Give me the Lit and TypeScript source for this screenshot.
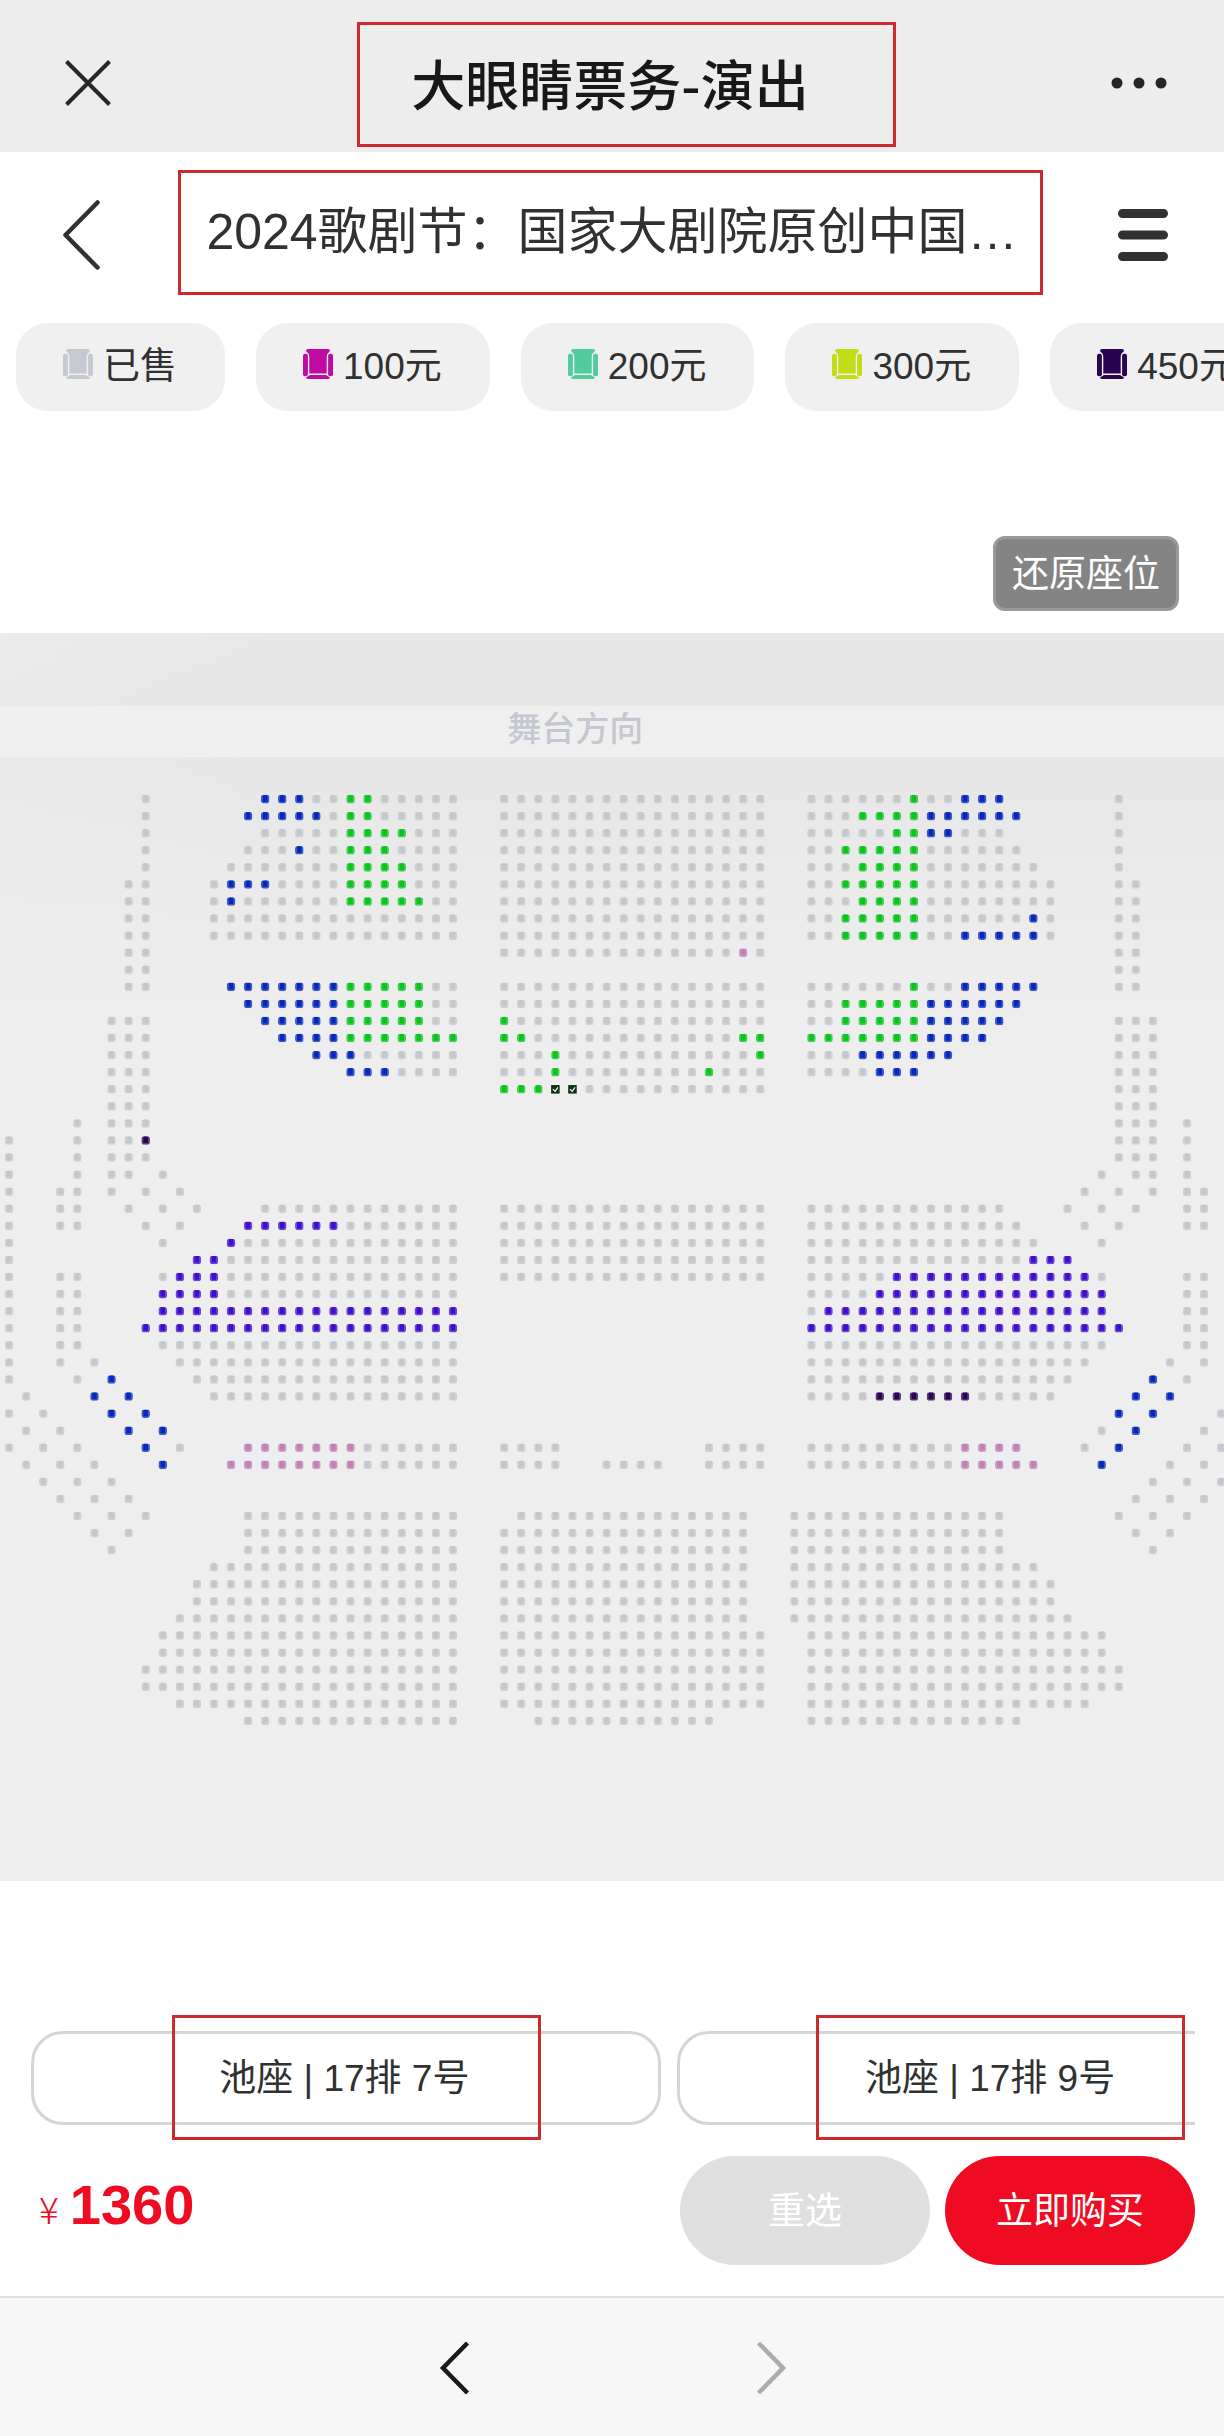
import { LitElement, html, svg, css } from "lit";
import { customElement, property } from "lit/decorators.js";

type SeatState = "s" | "b" | "g" | "v" | "p" | "d" | "k";

const SEAT_COLORS: Record<SeatState, string> = {
  s: "#c4c7ce",
  b: "#0827bb",
  g: "#0cc41f",
  v: "#3f0fcd",
  p: "#c47fb4",
  d: "#2c0350",
  k: "#0b3217",
};

// One entry per row. Each token is "column:runs", a run being a state letter and a count.
const SEAT_ROWS: string[] = [
  "8:s1 15:b3s2g2s5 29:s16 47:s6g1s2b3 65:s1",
  "8:s1 14:b5s1g2s5 29:s16 47:s3g4b6 65:s1",
  "8:s1 15:s5g4s3 29:s16 47:s5g2b2s3 65:s1",
  "8:s1 14:s3b1s2g3s4 29:s16 47:s2g5s6 65:s1",
  "8:s1 13:s7g4s3 29:s16 47:s3g4s7 65:s1",
  "7:s2 12:s1b3s4g4s3 29:s16 47:s2g5s8 65:s2",
  "7:s2 12:s1b1s6g5s2 29:s16 47:s3g4s8 65:s2",
  "7:s2 12:s15 29:s16 47:s2g5s6b1s1 65:s2",
  "7:s2 12:s15 29:s16 47:s2g5s2b5s1 65:s2",
  "7:s2 29:s14p1s1 65:s2",
  "7:s2 65:s2",
  "7:s2 13:b7g5s2 29:s16 47:s6g1s2b5 65:s2",
  "14:b6g5s2 29:s16 47:s2g5b6",
  "6:s3 15:b5g5s2 29:g1s15 47:s2g5b5 65:s3",
  "6:s3 16:b4g7 29:g2s12g2 47:g7b4 65:s3",
  "6:s3 18:b3s6 29:s3g1s11g1 47:s3b6 65:s3",
  "6:s3 20:b3s4 29:s3g1s8g1s3 47:s4b3 65:s3",
  "6:s3 29:g3k2s11 65:s3",
  "6:s3 65:s3",
  "4:s1 6:s3 65:s3 69:s1",
  "0:s1 4:s1 6:s2d1 65:s3 69:s1",
  "0:s1 4:s1 6:s3 65:s3 69:s1",
  "0:s1 4:s1 6:s2 9:s1 64:s1 66:s2 69:s1",
  "0:s1 3:s2 6:s1 8:s1 10:s1 63:s1 65:s1 67:s1 69:s2",
  "0:s1 3:s2 7:s1 9:s1 11:s1 15:s12 29:s16 47:s12 62:s1 64:s1 66:s1 69:s2",
  "0:s1 3:s2 8:s1 10:s1 14:v6s7 29:s16 47:s13 63:s1 65:s1 69:s2",
  "0:s1 9:s1 13:v1s13 29:s16 47:s14 64:s1",
  "0:s1 11:v2s14 29:s16 47:s13v3",
  "0:s1 3:s2 9:s1v3s14 29:s16 47:s5v12s1 69:s2",
  "0:s1 3:s2 9:v4s14 47:s4v14 69:s2",
  "0:s1 3:s2 9:v18 47:s1v17 69:s2",
  "0:s1 3:s2 8:v19 47:v19 69:s2",
  "0:s1 3:s2 9:s18 47:s18 69:s2",
  "0:s1 3:s1 5:s1 10:s17 47:s17 68:s1 70:s1",
  "0:s1 4:s1 6:b1 11:s16 47:s16 67:b1 69:s1",
  "1:s1 5:b1 7:b1 12:s15 47:s4d6s5 66:b1 68:b1",
  "0:s1 2:s1 6:b1 8:b1 65:b1 67:b1 71:s1",
  "1:s1 3:s1 7:b1 9:b1 64:s1 66:b1 70:s1",
  "0:s1 2:s1 4:s1 8:b1 10:s1 14:p7s6 29:s4 41:s4 47:s9p4 63:s1 65:b1 69:s1 71:s1",
  "1:s1 3:s1 5:s1 9:b1 13:p8s6 29:s4 35:s4 41:s4 47:s9p5 64:b1 68:s1 70:s1",
  "2:s1 4:s1 6:s1 67:s1 69:s1 71:s1",
  "3:s1 5:s1 7:s1 66:s1 68:s1 70:s1",
  "4:s1 6:s1 8:s1 14:s13 30:s14 46:s13 65:s1 67:s1 69:s1",
  "5:s1 7:s1 14:s13 29:s15 46:s13 66:s1 68:s1",
  "6:s1 14:s13 29:s15 46:s13 67:s1",
  "12:s15 29:s15 46:s15",
  "11:s16 29:s15 46:s16",
  "11:s16 29:s15 46:s16",
  "10:s17 29:s15 46:s17",
  "9:s18 29:s16 47:s18",
  "9:s18 29:s16 47:s18",
  "8:s19 29:s16 47:s19",
  "8:s19 29:s16 47:s19",
  "10:s17 29:s16 47:s17",
  "14:s13 31:s11 47:s13",
];

interface Seat {
  col: number;
  row: number;
  state: SeatState;
}

function parseSeats(rows: string[]): Seat[] {
  const seats: Seat[] = [];
  rows.forEach((line, row) => {
    for (const token of line.split(" ")) {
      const [start, runs] = token.split(":");
      let col = Number(start);
      for (const m of runs.matchAll(/([a-z])(\d+)/g)) {
        for (let i = 0; i < Number(m[2]); i++) {
          seats.push({ col: col++, row, state: m[1] as SeatState });
        }
      }
    }
  });
  return seats;
}

const SEATS = parseSeats(SEAT_ROWS);

@customElement("seat-icon")
export class SeatIcon extends LitElement {
  @property() color = "#c6c9d0";

  static styles = css`
    :host {
      display: block;
      flex: none;
    }
    .icon {
      display: block;
      width: 30px;
      height: 30px;
    }
  `;

  // Armchair seen from above: back and seat, two arms, front edge.
  render() {
    return html`
      <svg class="icon" viewBox="0 0 30 30" fill=${this.color} aria-hidden="true">
        <path d="M5 0H25Q27 0 27 2Q24 4 23.700 8V24.500H6.300V8Q6 4 3 2Q3 0 5 0Z"></path>
        <rect x="0" y="4.700" width="4.900" height="22.500" rx="2"></rect>
        <rect x="25.100" y="4.700" width="4.900" height="22.500" rx="2"></rect>
        <path d="M7 26H23L27 28.500Q26.500 30 25 30H5Q3.500 30 3 28.500Z"></path>
      </svg>
    `;
  }
}

@customElement("seat-map")
export class SeatMap extends LitElement {
  static styles = css`
    :host {
      display: block;
      background:
        radial-gradient(ellipse 280px 400px at 0 0, rgba(240, 240, 240, 0.35), transparent),
        linear-gradient(#e8e8e8 0, #e6e6e6 70px, #e7e7e7 130px, #ededed 340px, #eeeeee 480px);
    }
    .stage {
      margin: 0;
      padding: 0 6% 4px 0;
      background: #efefef;
      color: #c5c8d0;
      font-size: 34px;
      font-weight: 500;
      line-height: 47px;
      text-align: center;
    }
    .lead {
      height: 73px;
    }
    .seats {
      display: block;
      width: 100%;
    }
  `;

  private renderSeat(seat: Seat) {
    const x = 16 + seat.col * 30 - 7.5;
    const y = 74 + seat.row * 30 - 7.5;
    if (seat.state === "k") {
      return svg`
        <rect x=${x} y=${y} width="15" height="15" fill=${SEAT_COLORS.k}></rect>
        <path d="M${x + 3} ${y + 7}l4 4l5 -7" fill="none" stroke="#ffffff" stroke-width="2"></path>
      `;
    }
    return svg`<use href="#seat" x=${x} y=${y} width="15" height="15" fill=${SEAT_COLORS[seat.state]}></use>`;
  }

  render() {
    return html`
      <div class="lead"></div>
      <p class="stage">舞台方向</p>
      <svg class="seats" viewBox="0 0 2151 1975" role="img" aria-label="座位图">
        <symbol id="seat" viewBox="0 0 30 30">
          <rect x="0" y="0" width="30" height="30" rx="11" opacity="0.75"></rect>
          <rect x="7" y="1" width="16" height="23" rx="2"></rect>
        </symbol>
        ${SEATS.map((seat) => this.renderSeat(seat))}
      </svg>
    `;
  }
}

const LEGEND = [
  { label: "已售", color: "#c6c9d0" },
  { label: "100元", color: "#be0ca3" },
  { label: "200元", color: "#52cb9f" },
  { label: "300元", color: "#c2dc16" },
  { label: "450元", color: "#2c0350" },
];

const SELECTED = ["池座 | 17排 7号", "池座 | 17排 9号"];

@customElement("app-root")
export class AppRoot extends LitElement {
  static styles = css`
    :host {
      display: flex;
      flex-direction: column;
      min-height: 100vh;
      overflow: hidden;
      background: #ffffff;
      color: #303131;
      font-family: "Liberation Sans", "Noto Sans CJK SC", sans-serif;
      font-size: 37px;
      line-height: 48px;
    }
    * {
      box-sizing: border-box;
    }
    button {
      margin: 0;
      padding: 0;
      border: 0;
      background: none;
      color: inherit;
      font: inherit;
    }
    svg {
      display: block;
    }
    .bar {
      position: relative;
      display: grid;
      grid-template-columns: 176px 1fr 176px;
      align-items: center;
    }
    .bar h1,
    .bar h2 {
      margin: 0;
      text-align: center;
      white-space: nowrap;
    }
    .bar-app {
      height: 152px;
      padding-top: 14px;
      background: #ededed;
    }
    .bar-app h1 {
      padding-right: 4px;
      color: #181818;
      font-family: "Noto Sans CJK SC", sans-serif;
      font-size: 54px;
      font-weight: 500;
      line-height: 70px;
    }
    .bar-show {
      height: 156px;
      padding-top: 10px;
    }
    .bar-show h2 {
      padding-bottom: 6px;
      font-size: 50px;
      font-weight: 400;
      line-height: 66px;
    }
    .icon-start {
      justify-self: start;
      margin-left: 60px;
    }
    .icon-end {
      justify-self: end;
      margin-right: 50px;
    }
    .mark {
      position: absolute;
      border: 3px solid #cd2a30;
      pointer-events: none;
    }
    .mark-app {
      inset: 22px 328px 5px 357px;
    }
    .mark-show {
      inset: 18px 181px 13px 178px;
    }
    .legend {
      display: flex;
      gap: 31px;
      padding: 15px 0 0 16px;
      overflow: hidden;
    }
    .chip {
      display: flex;
      flex: none;
      align-items: center;
      gap: 10px;
      height: 88px;
      padding: 0 48px 0 47px;
      border-radius: 32px;
      background: #f0f0f0;
    }
    .chip seat-icon {
      margin-bottom: 6px;
    }
    .tools {
      display: flex;
      justify-content: flex-end;
      padding: 125px 45px 22px;
    }
    .restore {
      height: 75px;
      padding: 2px 16px 0;
      border: 3px solid #999999;
      border-radius: 12px;
      background: #848484;
      color: #ffffff;
    }
    .order {
      display: flex;
      flex-direction: column;
      gap: 31px;
      padding: 150px 29px 31px 31px;
    }
    .picked {
      position: relative;
    }
    .cards {
      display: flex;
      gap: 16px;
      margin: 0;
      padding: 0;
      overflow: hidden;
      list-style: none;
    }
    .card {
      display: flex;
      flex: none;
      align-items: center;
      justify-content: center;
      width: 54.1%;
      height: 94px;
      padding: 2px 3px 0 0;
      border: 3px solid #d5d5d5;
      border-radius: 32px;
    }
    .mark-first {
      inset: -16px 654px -15px 141px;
    }
    .mark-second {
      inset: -16px 10px -15px 785px;
    }
    .pay {
      display: flex;
      align-items: center;
      gap: 15px;
    }
    .price {
      display: flex;
      flex: 1;
      align-items: baseline;
      gap: 11px;
      margin: 0;
      padding: 0 0 10px 8px;
      color: #ef0b22;
    }
    .price strong {
      font-size: 56px;
      line-height: 64px;
    }
    .currency {
      font-family: "Noto Sans CJK SC", sans-serif;
      font-weight: 300;
    }
    .action {
      width: 250px;
      height: 109px;
      padding-top: 4px;
      border-radius: 55px;
      color: #ffffff;
    }
    .reset {
      background: #e0e0e0;
    }
    .buy {
      background: #ef0b22;
    }
    .browser {
      display: flex;
      flex: 1;
      align-items: center;
      justify-content: center;
      gap: 274px;
      min-height: 140px;
      padding: 2px 0 0 2px;
      border-top: 2px solid #e0e0e0;
      background: #f7f7f7;
    }
  `;

  render() {
    return html`
      <header class="bar bar-app">
        <button class="icon-start" aria-label="关闭">
          <svg width="56" height="56" viewBox="0 0 56 56" fill="none" stroke="#262626" stroke-width="4">
            <path d="M6.500 6.500L49.500 49.500M49.500 6.500L6.500 49.500"></path>
          </svg>
        </button>
        <h1>大眼睛票务-演出</h1>
        <button class="icon-end" aria-label="更多">
          <svg width="70" height="56" viewBox="0 0 70 56" fill="#262626">
            <circle cx="13" cy="28" r="5.500"></circle>
            <circle cx="35" cy="28" r="5.500"></circle>
            <circle cx="57" cy="28" r="5.500"></circle>
          </svg>
        </button>
        <div class="mark mark-app"></div>
      </header>

      <div class="bar bar-show">
        <button class="icon-start" aria-label="返回">
          <svg width="44" height="76" viewBox="0 0 44 76" fill="none" stroke="#303131" stroke-width="4.500"
            stroke-linecap="round" stroke-linejoin="round">
            <path d="M37.500 5.500L5.500 38L37.500 70.500"></path>
          </svg>
        </button>
        <h2>2024歌剧节：国家大剧院原创中国…</h2>
        <button class="icon-end" aria-label="菜单">
          <svg width="60" height="60" viewBox="0 0 60 60" stroke="#303131" stroke-width="9" stroke-linecap="round">
            <path d="M8.500 8.500H49.500M8.500 30H49.500M8.500 51.500H49.500"></path>
          </svg>
        </button>
        <div class="mark mark-show"></div>
      </div>

      <div class="legend">
        ${LEGEND.map(
          (item) => html`
            <button class="chip"><seat-icon color=${item.color}></seat-icon><span>${item.label}</span></button>
          `
        )}
      </div>

      <div class="tools"><button class="restore">还原座位</button></div>

      <seat-map></seat-map>

      <section class="order">
        <div class="picked">
          <ul class="cards">
            ${SELECTED.map((seat) => html`<li class="card">${seat}</li>`)}
          </ul>
          <div class="mark mark-first"></div>
          <div class="mark mark-second"></div>
        </div>
        <div class="pay">
          <p class="price"><span class="currency">¥</span><strong>1360</strong></p>
          <button class="action reset">重选</button>
          <button class="action buy">立即购买</button>
        </div>
      </section>

      <nav class="browser">
        <button aria-label="后退">
          <svg width="40" height="60" viewBox="0 0 40 60" fill="none" stroke="#1a1a1a" stroke-width="4.500">
            <path d="M31.500 5L7 30L31.500 55"></path>
          </svg>
        </button>
        <button aria-label="前进">
          <svg width="40" height="60" viewBox="0 0 40 60" fill="none" stroke="#acacac" stroke-width="4.500">
            <path d="M8.500 5L33 30L8.500 55"></path>
          </svg>
        </button>
      </nav>
    `;
  }
}
